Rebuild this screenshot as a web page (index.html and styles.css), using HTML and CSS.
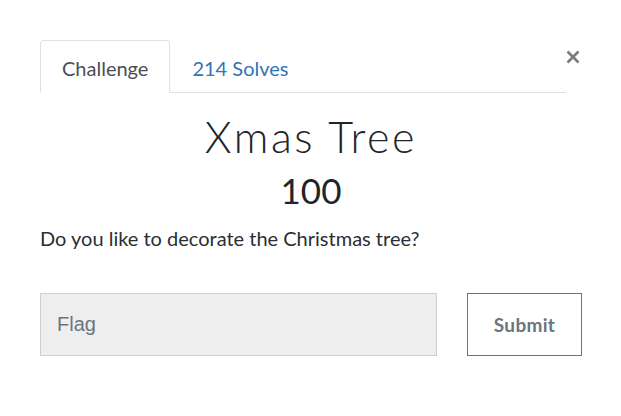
FILE: index.html
```html
<!DOCTYPE html>
<html>
<head>
<meta charset="utf-8">
<link rel="stylesheet" href="styles.css">
</head>
<body>
<div class="modal">
  <div class="head">
    <ul class="tabs">
      <li class="tab active">Challenge</li>
      <li class="tab link">214 Solves</li>
    </ul>
    <button class="close" aria-label="Close"><svg width="14" height="14" viewBox="0 0 14 14"><path d="M1.5 1.5 L12.5 12.5 M12.5 1.5 L1.5 12.5" stroke="#7b7b7b" stroke-width="2.6" stroke-linecap="butt"/></svg></button>
  </div>
  <h2 class="title">Xmas Tree</h2>
  <h3 class="value">100</h3>
  <p class="desc">Do you like to decorate the Christmas tree?</p>
  <form class="submit-row">
    <input class="flag" type="text" placeholder="Flag">
    <button class="submit" type="button">Submit</button>
  </form>
</div>
</body>
</html>
```
FILE: styles.css
```css
html, body {
  margin: 0;
  background: #fff;
}
body {
  font-family: Lato, "Open Sans", sans-serif;
  color: #212529;
}
.modal {
  width: 621px;
  height: 416px;
  box-sizing: border-box;
  padding: 40px 39px 0 40px;
}
.head {
  display: flex;
  align-items: flex-start;
}
.tabs {
  display: flex;
  list-style: none;
  margin: 0;
  padding: 0;
  width: 526px;
  border-bottom: 1px solid #dee2e6;
}
.tab {
  font-size: 20px;
  height: 51px;
  line-height: 54px;
  padding: 0 21px;
  box-sizing: border-box;
  margin-bottom: -1px;
  border: 1px solid transparent;
  border-radius: 4px 4px 0 0;
}
.tab.active {
  color: #495057;
  border-color: #dee2e6 #dee2e6 #fff;
  background: #fff;
  height: 53px;
}
.tab.link {
  color: #3174b7;
}
.close {
  margin-left: auto;
  background: none;
  border: 0;
  padding: 0;
  margin-top: 10px;
  margin-right: 0;
  width: 16px;
  height: 14px;
  display: flex;
}
.title {
  margin: 19px 0 0;
  text-align: center;
  font-weight: 300;
  font-size: 43px;
  line-height: 50px;
  letter-spacing: 2.6px;
  color: #212529;
}
.value {
  margin: 7px 0 0;
  text-align: center;
  font-weight: 400;
  font-size: 35px;
  line-height: 42px;
  color: #212529;
}
.desc {
  margin: 12px 0 0;
  font-size: 20px;
  line-height: 30px;
  color: #2a2e33;
}
.submit-row {
  display: flex;
  gap: 30px;
  margin-top: 40px;
}
.flag {
  width: 397px;
  height: 63px;
  box-sizing: border-box;
  background: #eee;
  border: 1px solid #ccd0d5;
  padding: 0 16px;
  font-family: "Liberation Sans", Arial, sans-serif;
  font-size: 20px;
  color: #495057;
  outline: none;
}
.flag::placeholder {
  color: #6c757d;
}
.submit {
  width: 115px;
  height: 63px;
  box-sizing: border-box;
  background: #fff;
  border: 1px solid #6c757d;
  font-family: Lato, sans-serif;
  font-weight: bold;
  font-size: 19px;
  letter-spacing: 0.3px;
  color: #6c757d;
}
```
